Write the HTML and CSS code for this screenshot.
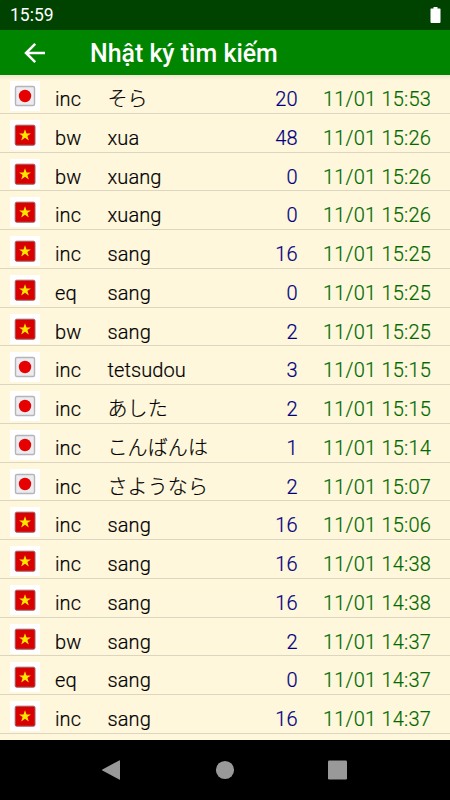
FILE: index.html
```html
<!DOCTYPE html>
<html lang="vi">
<head>
    <meta charset="UTF-8">
    <meta name="viewport" content="width=device-width, initial-scale=1.0">
    <title>Nhật ký tìm kiếm</title>
    <link rel="stylesheet" href="styles.css">
</head>
<body>

    <div class="status-bar">
        <span>15:59</span>
        <svg class="battery" width="11" height="18" viewBox="0 0 11 18">
            <path d="M3.5 1h4v1.5H10q.5 0 .5.5v13q0 1-1 1h-8q-1 0-1-1V3q0-.5.5-.5h2.5z" fill="#fff"/>
        </svg>
    </div>

    <header class="app-bar">
        <svg class="back" width="22" height="22" viewBox="0 0 22 22">
            <path d="M21 11H2.5M11.2 1.8L2 11l9.2 9.2" fill="none" stroke="#fff" stroke-width="2.5"/>
        </svg>
        <h1>Nhật ký tìm kiếm</h1>
    </header>

    <main class="history" id="history"></main>

    <nav class="nav-bar">
        <svg width="20" height="20" viewBox="0 0 20 20"><path d="M18 .8v18.4q0 .8-.8.4L.4 10.5q-.6-.5 0-1L17.2.4q.8-.4.8.4z"/></svg>
        <svg width="20" height="20" viewBox="0 0 20 20"><circle cx="10" cy="10" r="9.1"/></svg>
        <svg width="20" height="20" viewBox="0 0 20 20"><rect x="0" y=".5" width="19" height="19" rx="1.2"/></svg>
    </nav>

    <script>
        const flags = {
            ja: `<rect x="5.5" y="5.5" width="19" height="19" rx="1.5" fill="#ececf0" stroke="#b5b5b9" stroke-width="1.4"/>
                 <circle cx="15" cy="15" r="6.2" fill="#e60000"/>`,
            vi: `<rect x="5.2" y="5.2" width="19.8" height="20" rx="1.5" fill="#d80000" stroke="#a06060" stroke-width="1"/>
                 <path d="M15 9.2l1.5 4.2h4.4l-3.5 2.7 1.4 4.3-3.8-2.6-3.8 2.6 1.4-4.3-3.5-2.7h4.4z" fill="#ffe600"/>`
        };

        const rows = [
            ["ja", "inc", "そら", 20, "11/01 15:53"],
            ["vi", "bw", "xua", 48, "11/01 15:26"],
            ["vi", "bw", "xuang", 0, "11/01 15:26"],
            ["vi", "inc", "xuang", 0, "11/01 15:26"],
            ["vi", "inc", "sang", 16, "11/01 15:25"],
            ["vi", "eq", "sang", 0, "11/01 15:25"],
            ["vi", "bw", "sang", 2, "11/01 15:25"],
            ["ja", "inc", "tetsudou", 3, "11/01 15:15"],
            ["ja", "inc", "あした", 2, "11/01 15:15"],
            ["ja", "inc", "こんばんは", 1, "11/01 15:14"],
            ["ja", "inc", "さようなら", 2, "11/01 15:07"],
            ["vi", "inc", "sang", 16, "11/01 15:06"],
            ["vi", "inc", "sang", 16, "11/01 14:38"],
            ["vi", "inc", "sang", 16, "11/01 14:38"],
            ["vi", "bw", "sang", 2, "11/01 14:37"],
            ["vi", "eq", "sang", 0, "11/01 14:37"],
            ["vi", "inc", "sang", 16, "11/01 14:37"]
        ];

        document.getElementById("history").innerHTML = rows.map(([lang, mode, word, count, time]) => `
            <div class="row">
                <svg class="flag" width="30" height="30" viewBox="0 0 30 30">${flags[lang]}</svg>
                <span class="mode">${mode}</span>
                <span class="word">${word}</span>
                <span class="count">${count}</span>
                <span class="time">${time}</span>
            </div>`).join("");
    </script>

</body>
</html>
```

FILE: styles.css
```css
body {
    margin: 0;
    height: 800px;
    display: flex;
    flex-direction: column;
    overflow: hidden;
    font-family: Roboto, "Noto Sans CJK JP", sans-serif;
    background-color: #fff7dc;
}
.status-bar {
    height: 30px;
    box-sizing: border-box;
    padding: 0 9px 0 10px;
    display: flex;
    align-items: center;
    justify-content: space-between;
    background-color: #004200;
    color: #fff;
    font-size: 17.5px;
}
.app-bar {
    height: 45px;
    display: flex;
    align-items: center;
    background-color: #008500;
    color: #fff;
}
.back {
    margin-left: 24px;
}
.app-bar h1 {
    margin: 2px 0 0 44px;
    font-size: 24.9px;
    font-weight: 500;
    line-height: 30px;
}
.history {
    flex: 1;
    overflow: hidden;
    background-image: linear-gradient(rgba(0, 0, 0, 0.07), transparent 5px);
}
.row {
    height: 38.76px;
    box-sizing: border-box;
    padding: 5px 19px 0 10px;
    display: grid;
    grid-template-columns: 45px 52.5px 120px 70px 1fr;
    border-bottom: 1px solid #dcd5bf;
    font-size: 20px;
    font-weight: 300;
    line-height: 39px;
    color: #000;
    white-space: nowrap;
    -webkit-text-stroke: 0.2px;
}
.flag {
    margin-top: 1px;
    background-color: #fff;
}
.mode,
.word {
    letter-spacing: 0.1px;
}
.count {
    text-align: right;
    color: #000080;
}
.time {
    text-align: right;
    color: #006a00;
    letter-spacing: 0.2px;
}
.nav-bar {
    height: 60px;
    box-sizing: border-box;
    padding: 0 102px;
    display: flex;
    align-items: center;
    justify-content: space-between;
    background-color: #000;
    fill: #999;
}
```
